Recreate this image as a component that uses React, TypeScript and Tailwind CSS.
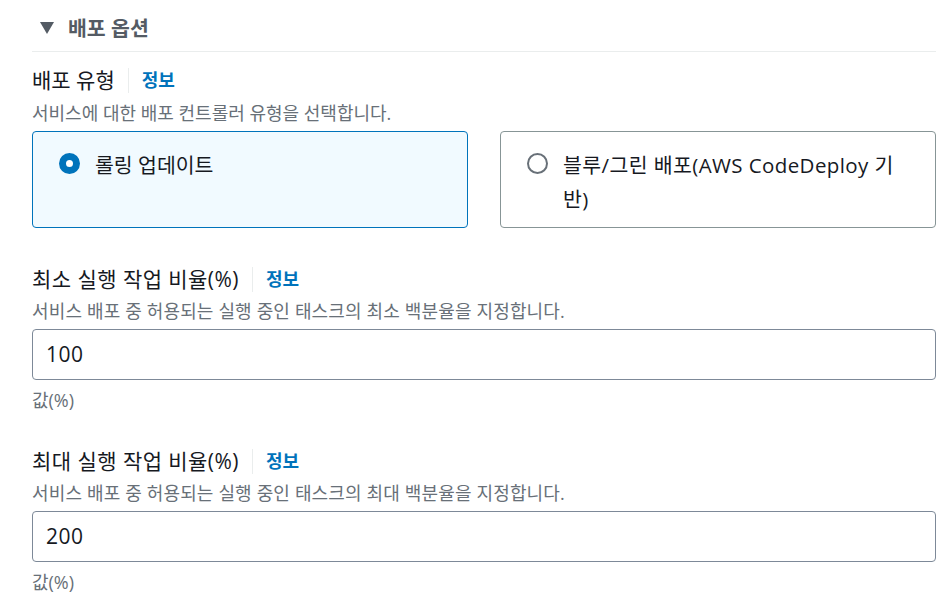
import React from "react";

const F = { fontFamily: '"Open Sans", "Noto Sans CJK KR", sans-serif' };

function Info() {
  return (
    <div className="flex items-center">
      <div className="mx-[13px] h-[25px] w-px bg-[#eaeded]" />
      <span className="text-[18px] font-bold leading-[30px] text-[#0073bb]">정보</span>
    </div>
  );
}

function Field({ label, desc, value, top }: { label: string; desc: string; value: string; top: string }) {
  return (
    <div className={top}>
      <div className="flex items-center">
        <span className="text-[21px] leading-[30px] tracking-[0.45px] text-[#16191f]">{label}</span>
        <Info />
      </div>
      <div className="mt-[6px] text-[18px] leading-[22px] tracking-[0.15px] text-[#687078]">{desc}</div>
      <div className="mt-[7px] flex h-[51px] items-center rounded-[4px] border border-[#7d8998] px-[13px] text-[21px] tracking-[0.5px] text-[#16191f]">
        {value}
      </div>
      <div className="mt-[9px] text-[18px] leading-[22px] text-[#687078]">값(%)</div>
    </div>
  );
}

export default function App() {
  return (
    <div className="h-[610px] w-[948px] overflow-hidden bg-white pl-[32px] pr-[12px]" style={F}>
      <div className="flex h-[52px] items-start border-b border-[#eaeded] pt-[14px]">
        <svg width="14" height="12" viewBox="0 0 14 12" className="ml-[8px] mt-[8px]">
          <path d="M0 0 L14 0 L7 12 Z" fill="#545b64" />
        </svg>
        <span className="ml-[14px] text-[20.5px] font-bold leading-[28px] text-[#545b64]">배포 옵션</span>
      </div>

      <div className="mt-[13px] flex items-center">
        <span className="text-[21px] leading-[30px] text-[#16191f]">배포 유형</span>
        <Info />
      </div>
      <div className="mt-[7px] text-[18px] leading-[22px] text-[#687078]">서비스에 대한 배포 컨트롤러 유형을 선택합니다.</div>

      <div className="mt-[7px] grid grid-cols-2 gap-[32px]">
        <div className="flex rounded-[4px] border border-[#0073bb] bg-[#f1faff] pb-[11px] pl-[26px] pr-[20px] pt-[16px]">
          <div className="mt-[5px] h-[21px] w-[21px] shrink-0 rounded-full border-[7px] border-[#0073bb] bg-white" />
          <span className="ml-[15px] text-[20.5px] leading-[34px] text-[#16191f]">롤링 업데이트</span>
        </div>
        <div className="flex rounded-[4px] border border-[#879596] bg-white pb-[11px] pl-[26px] pr-[24px] pt-[16px]">
          <div className="mt-[5px] h-[21px] w-[21px] shrink-0 rounded-full border-2 border-[#687078] bg-white" />
          <span className="ml-[15px] text-[20.5px] leading-[34px] tracking-[0.4px] text-[#16191f]">블루/그린 배포(AWS CodeDeploy 기반)</span>
        </div>
      </div>

      <Field
        top="mt-[36px]"
        label="최소 실행 작업 비율(%)"
        desc="서비스 배포 중 허용되는 실행 중인 태스크의 최소 백분율을 지정합니다."
        value="100"
      />
      <Field
        top="mt-[35px]"
        label="최대 실행 작업 비율(%)"
        desc="서비스 배포 중 허용되는 실행 중인 태스크의 최대 백분율을 지정합니다."
        value="200"
      />
    </div>
  );
}
